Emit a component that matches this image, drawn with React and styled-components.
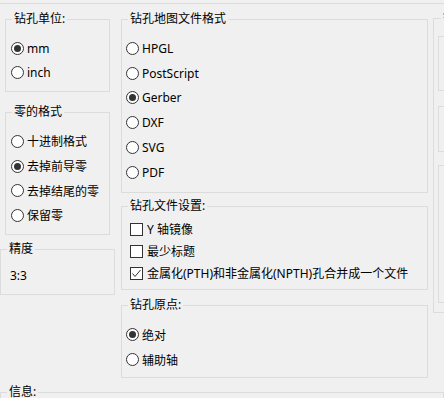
import React from 'react'
import styled, { createGlobalStyle } from 'styled-components'

const Global = createGlobalStyle`
  html, body {
    margin: 0;
    padding: 0;
    background: #f0f0f0;
    overflow: hidden;
  }
  body {
    font-family: "Noto Sans", "Noto Sans CJK SC", sans-serif;
    font-size: 12px;
    color: #000;
  }
`

const Page = styled.div`
  width: 444px;
  height: 398px;
  overflow: hidden;
  display: flex;
  flex-direction: column;
`

const TopEdge = styled.div`
  height: 3px;
  border-bottom: 1px solid #dcdcdc;
  flex: none;
`

const Main = styled.div`
  height: 380px;
  display: flex;
  flex: none;
`

const Column = styled.div`
  width: ${p => p.$w}px;
  margin-left: ${p => p.$ml || 0}px;
  display: flex;
  flex-direction: column;
  align-items: flex-start;
  flex: none;
`

const Group = styled.fieldset`
  box-sizing: border-box;
  margin: ${p => p.$mt || 0}px 0 0 ${p => p.$ml || 0}px;
  padding: 0;
  min-width: 0;
  width: ${p => p.$w}px;
  height: ${p => p.$h}px;
  border: 1px solid #dcdcdc;
  flex: none;
`

const Legend = styled.legend`
  margin-left: ${p => p.$ml ?? 6}px;
  padding: 0 2px;
  line-height: 16px;
  font-size: 12px;
  white-space: nowrap;
`

const Body = styled.div`
  padding: ${p => p.$pt}px 0 0 ${p => p.$pl}px;
`

const Row = styled.label`
  display: flex;
  align-items: center;
  gap: ${p => p.$gap || 3}px;
  height: ${p => p.$h}px;
  white-space: nowrap;
`

const Circle = styled.span`
  box-sizing: border-box;
  width: 13px;
  height: 13px;
  border-radius: 50%;
  border: 1px solid #333;
  background: #fff;
  display: flex;
  align-items: center;
  justify-content: center;
  flex: none;

  &::after {
    content: '';
    width: 7px;
    height: 7px;
    border-radius: 50%;
    background: ${p => (p.$on ? '#333' : 'transparent')};
  }
`

const Box = styled.span`
  box-sizing: border-box;
  width: 13px;
  height: 13px;
  border: 1px solid #333;
  background: #fff;
  display: flex;
  align-items: center;
  justify-content: center;
  flex: none;
`

const Value = styled.div`
  padding: 11px 0 0 9px;
  line-height: 16px;
`

const Inner = styled.div`
  box-sizing: border-box;
  margin: ${p => p.$mt}px 0 0 4px;
  height: ${p => p.$h}px;
  border: 1px solid #dcdcdc;
  width: 40px;
`

const Info = styled.fieldset`
  margin: 0;
  padding: 0;
  height: 40px;
  border: 1px solid #dcdcdc;
  border-bottom: none;
  flex: none;
`

const Radio = ({ on, h, children }) => (
  <Row $h={h}>
    <Circle $on={on} />
    <span>{children}</span>
  </Row>
)

const Check = ({ on, children }) => (
  <Row $h={22} $gap={4}>
    <Box>
      {on && (
        <svg width="11" height="11" viewBox="0 0 11 11">
          <polyline points="1.5,5.5 4,8.5 9.5,2" fill="none" stroke="#333" strokeWidth="1" />
        </svg>
      )}
    </Box>
    <span>{children}</span>
  </Row>
)

const formats = ['HPGL', 'PostScript', 'Gerber', 'DXF', 'SVG', 'PDF']
const zeros = ['十进制格式', '去掉前导零', '去掉结尾的零', '保留零']

export default function App() {
  return (
    <Page>
      <Global />
      <TopEdge />
      <Main>
        <Column $w={115}>
          <Group $mt={7} $ml={5} $w={105} $h={81}>
            <Legend>钻孔单位:</Legend>
            <Body $pt={9} $pl={5}>
              <Radio h={24} on>mm</Radio>
              <Radio h={24}>inch</Radio>
            </Body>
          </Group>
          <Group $mt={12} $ml={5} $w={105} $h={131}>
            <Legend>零的格式</Legend>
            <Body $pt={9} $pl={5}>
              {zeros.map((z, i) => (
                <Radio key={z} h={24.7} on={i === 1}>{z}</Radio>
              ))}
            </Body>
          </Group>
          <Group $mt={6} $w={115} $h={54}>
            <Legend>精度</Legend>
            <Value>3:3</Value>
          </Group>
        </Column>

        <Column $w={307} $ml={6}>
          <Group $mt={7} $w={307} $h={182}>
            <Legend>钻孔地图文件格式</Legend>
            <Body $pt={9} $pl={4}>
              {formats.map((f, i) => (
                <Radio key={f} h={24.8} on={i === 2}>{f}</Radio>
              ))}
            </Body>
          </Group>
          <Group $mt={5} $w={307} $h={92}>
            <Legend>钻孔文件设置:</Legend>
            <Body $pt={4} $pl={8}>
              <Check>Y 轴镜像</Check>
              <Check>最少标题</Check>
              <Check on>金属化(PTH)和非金属化(NPTH)孔合并成一个文件</Check>
            </Body>
          </Group>
          <Group $mt={7} $w={307} $h={81}>
            <Legend>钻孔原点:</Legend>
            <Body $pt={9} $pl={4}>
              <Radio h={25} on>绝对</Radio>
              <Radio h={25}>辅助轴</Radio>
            </Body>
          </Group>
        </Column>

        <Column $w={60} $ml={5}>
          <Group $mt={6} $w={60} $h={303}>
            <Legend $ml={7}>钻孔地图</Legend>
            <Inner $mt={10} $h={55} />
            <Inner $mt={15} $h={46} />
            <Inner $mt={13} $h={138} />
          </Group>
        </Column>
      </Main>
      <Info>
        <Legend>信息:</Legend>
      </Info>
    </Page>
  )
}
